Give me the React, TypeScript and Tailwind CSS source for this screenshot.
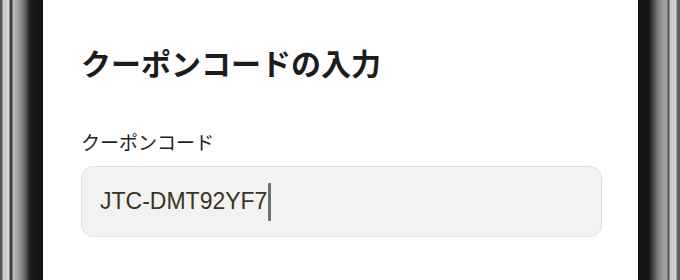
import React from 'react';

const LeftBezel: React.FC = () => (
  <div className="w-[43px] shrink-0 bg-[linear-gradient(to_right,#4f4f4f_0px,#5c5c5c_2px,#c4c8ca_3px,#d2d5d7_9px,#3c3c3c_10px,#404040_12px,#b9bbbc_13px,#a9abac_16px,#8a8a8a_21px,#5a5a5a_26px,#1c1c1c_30px,#121212_43px)]" />
);

const RightBezel: React.FC = () => (
  <div className="w-[42px] shrink-0 bg-[linear-gradient(to_right,#121212_0px,#161616_11px,#3a3a3a_14px,#7c7c7c_20px,#9a9a9a_25px,#a0a0a0_29px,#555555_30px,#4e4e4e_31px,#c5c9cb_32px,#d3d6d8_38px,#6a6a6a_39px,#5a5a5a_42px)]" />
);

const CouponInput: React.FC<{ value: string }> = ({ value }) => (
  <div className="flex h-[71px] items-center rounded-[12px] border border-[#e1e1e1] bg-[#f2f2f2] pl-[18px]">
    <span className="font-['Liberation_Sans',sans-serif] text-[23px] leading-none text-[#3b3420]">
      {value}
    </span>
    <span className="ml-[1px] h-[38px] w-[3px] rounded-[1px] bg-[#6e6e6e]" />
  </div>
);

export default function App() {
  return (
    <div className="flex h-[280px] w-full overflow-hidden bg-white">
      <LeftBezel />
      <div className="flex-1 bg-white pl-[38px] pr-[36px] pt-[43px] font-['Noto_Sans_CJK_JP',sans-serif]">
        <h1 className="text-[30px] font-bold leading-[38px] text-[#1c1c1c]">
          クーポンコードの入力
        </h1>
        <label className="mt-[49px] block text-[19px] leading-[24px] text-[#222222]">
          クーポンコード
        </label>
        <div className="mt-[12px]">
          <CouponInput value="JTC-DMT92YF7" />
        </div>
      </div>
      <RightBezel />
    </div>
  );
}
